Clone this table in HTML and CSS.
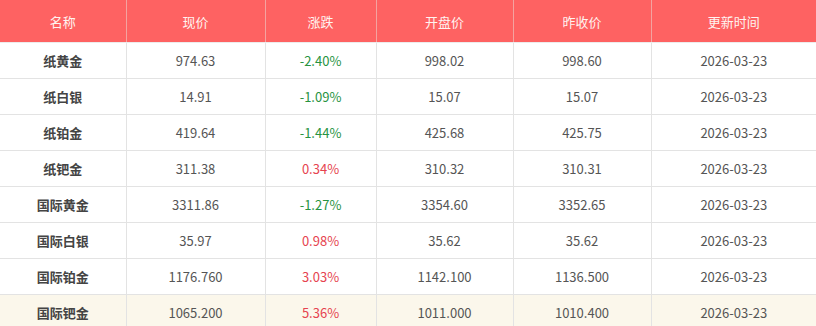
FILE: index.html
```html
<!DOCTYPE html>
<html lang="zh">
<head>
<meta charset="utf-8">
<title>贵金属行情</title>
<link rel="stylesheet" href="styles.css">
</head>
<body>
<table class="quote">
  <colgroup>
    <col class="c1"><col class="c2"><col class="c3"><col class="c4"><col class="c5"><col class="c6">
  </colgroup>
  <thead>
    <tr><th>名称</th><th>现价</th><th>涨跌</th><th>开盘价</th><th>昨收价</th><th>更新时间</th></tr>
  </thead>
  <tbody>
    <tr><td class="name">纸黄金</td><td>974.63</td><td class="down">-2.40%</td><td>998.02</td><td>998.60</td><td>2026-03-23</td></tr>
    <tr><td class="name">纸白银</td><td>14.91</td><td class="down">-1.09%</td><td>15.07</td><td>15.07</td><td>2026-03-23</td></tr>
    <tr><td class="name">纸铂金</td><td>419.64</td><td class="down">-1.44%</td><td>425.68</td><td>425.75</td><td>2026-03-23</td></tr>
    <tr><td class="name">纸钯金</td><td>311.38</td><td class="up">0.34%</td><td>310.32</td><td>310.31</td><td>2026-03-23</td></tr>
    <tr><td class="name">国际黄金</td><td>3311.86</td><td class="down">-1.27%</td><td>3354.60</td><td>3352.65</td><td>2026-03-23</td></tr>
    <tr><td class="name">国际白银</td><td>35.97</td><td class="up">0.98%</td><td>35.62</td><td>35.62</td><td>2026-03-23</td></tr>
    <tr><td class="name">国际铂金</td><td>1176.760</td><td class="up">3.03%</td><td>1142.100</td><td>1136.500</td><td>2026-03-23</td></tr>
    <tr class="hover"><td class="name">国际钯金</td><td>1065.200</td><td class="up">5.36%</td><td>1011.000</td><td>1010.400</td><td>2026-03-23</td></tr>
  </tbody>
</table>
</body>
</html>
```
FILE: styles.css
```css
html, body {
  margin: 0;
  padding: 0;
  background: #fff;
}
.quote {
  width: 816px;
  border-collapse: collapse;
  table-layout: fixed;
  font-family: "Noto Sans CJK SC", "Microsoft YaHei", sans-serif;
  font-size: 13px;
  color: #555;
}
.c1 { width: 126px; }
.c2 { width: 139px; }
.c3 { width: 111px; }
.c4 { width: 137px; }
.c5 { width: 138px; }
.c6 { width: 165px; }
.quote th {
  height: 42px;
  padding: 0;
  background: #fe6262;
  color: #fff3f0;
  font-weight: normal;
  text-align: center;
  border-right: 1px solid #f4a3a0;
  border-bottom: 1px solid #ececec;
}
.quote th:last-child, .quote td:last-child { border-right: none; }
.quote td {
  height: 35px;
  padding: 0;
  text-align: center;
  border-right: 1px solid #e3e3e3;
  border-bottom: 1px solid #e3e3e3;
}
.quote td.name {
  font-weight: bold;
  color: #444;
}
.quote td.down { color: #27933f; }
.quote td.up { color: #e6434f; }
.quote tr.hover td { background: #fbf7eb; }
```
